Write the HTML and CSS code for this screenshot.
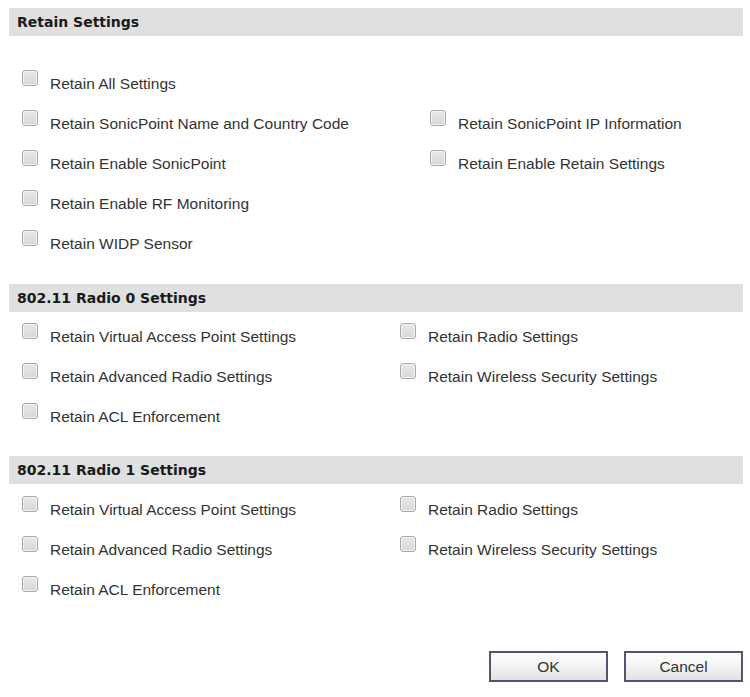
FILE: index.html
```html
<!DOCTYPE html>
<html lang="en">
<head>
  <meta charset="UTF-8">
  <title>Retain Settings</title>
  <link rel="stylesheet" href="styles.css">
</head>
<body>
  <div class="dialog">
    <div class="section first">
      <div class="sec-title">Retain Settings</div>
      <div class="opts wide">
        <label class="opt"><span class="box"></span>Retain All Settings</label>
        <label class="opt"></label>
        <label class="opt"><span class="box"></span>Retain SonicPoint Name and Country Code</label>
        <label class="opt"><span class="box"></span>Retain SonicPoint IP Information</label>
        <label class="opt"><span class="box"></span>Retain Enable SonicPoint</label>
        <label class="opt"><span class="box"></span>Retain Enable Retain Settings</label>
        <label class="opt"><span class="box"></span>Retain Enable RF Monitoring</label>
        <label class="opt"></label>
        <label class="opt"><span class="box"></span>Retain WIDP Sensor</label>
      </div>
    </div>

    <div class="section">
      <div class="sec-title">802.11 Radio 0 Settings</div>
      <div class="opts">
        <label class="opt"><span class="box"></span>Retain Virtual Access Point Settings</label>
        <label class="opt"><span class="box"></span>Retain Radio Settings</label>
        <label class="opt"><span class="box"></span>Retain Advanced Radio Settings</label>
        <label class="opt"><span class="box"></span>Retain Wireless Security Settings</label>
        <label class="opt"><span class="box"></span>Retain ACL Enforcement</label>
      </div>
    </div>

    <div class="section last">
      <div class="sec-title">802.11 Radio 1 Settings</div>
      <div class="opts">
        <label class="opt"><span class="box"></span>Retain Virtual Access Point Settings</label>
        <label class="opt"><span class="box"></span>Retain Radio Settings</label>
        <label class="opt"><span class="box"></span>Retain Advanced Radio Settings</label>
        <label class="opt"><span class="box"></span>Retain Wireless Security Settings</label>
        <label class="opt"><span class="box"></span>Retain ACL Enforcement</label>
      </div>
    </div>

    <div class="actions">
      <button class="btn">OK</button>
      <button class="btn">Cancel</button>
    </div>
  </div>
</body>
</html>
```

FILE: styles.css
```css
* {
  font-family: 'Liberation Sans', Arial, sans-serif;
  box-sizing: border-box;
}
body {
  margin: 0;
  background: #fff;
}
.dialog {
  padding: 8px 7px 0 9px;
  width: 750px;
}
.section {
  margin-bottom: 20px;
}
.section.first {
  margin-bottom: 21px;
}
.sec-title {
  background: #e0e0e0;
  height: 28px;
  line-height: 28px;
  padding-left: 8px;
  font-family: 'DejaVu Sans', sans-serif;
  font-size: 14px;
  font-weight: bold;
  color: #1a1a1a;
}
.opts {
  display: grid;
  grid-template-columns: 378px 1fr;
  padding: 4px 0 0 13px;
}
.opts.wide {
  grid-template-columns: 408px 1fr;
}
.first .opts {
  padding-top: 27px;
}
.last .opts {
  padding-top: 5px;
}
.opt {
  display: flex;
  align-items: center;
  height: 40px;
  padding-top: 2px;
  font-size: 15.5px;
  color: #333;
}
.box {
  width: 16px;
  height: 16px;
  margin: 0 12px 12px 0;
  border: 1px solid #a8a8a8;
  border-radius: 3px;
  background: linear-gradient(#e8e8e8, #d8d8d8);
  box-shadow: inset 0 0 0 1px #f2f2f2;
}
.actions {
  display: flex;
  justify-content: flex-end;
  gap: 16px;
  padding-top: 22px;
}
.btn {
  width: 119px;
  height: 31px;
  border: 2px solid #55556a;
  background: linear-gradient(#fdfdfd, #f6f6f6 40%, #e2e2e2);
  font-size: 15.5px;
  color: #333;
}
```
